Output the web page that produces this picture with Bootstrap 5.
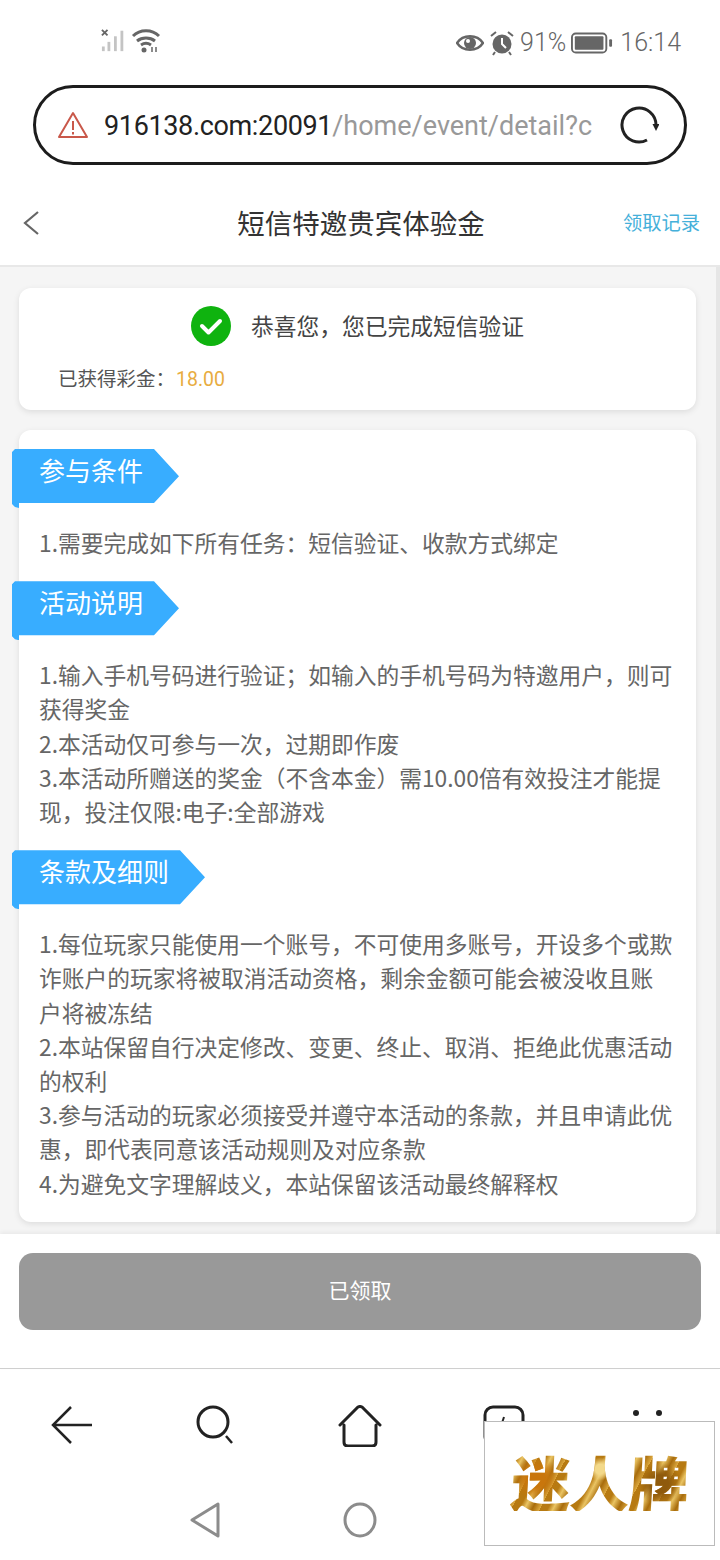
<!DOCTYPE html>
<html lang="zh-CN">
<head>
  <meta charset="UTF-8" />
  <meta name="viewport" content="width=device-width, initial-scale=1.0" />
  <title>短信特邀贵宾体验金</title>
  <link href="https://cdn.jsdelivr.net/npm/bootstrap@5.3.3/dist/css/bootstrap.min.css" rel="stylesheet">
  <style>
    body {
      width: 720px;
      height: 1560px;
      overflow: hidden;
      position: relative;
      background: #fff;
      font-family: "Noto Sans CJK SC", Roboto, sans-serif;
      color: #666;
    }
    .status-bar { height: 85px; padding: 27px 39px 0 101px; color: #666; font-family: Roboto, sans-serif; font-size: 25px; font-weight: 300; line-height: 30px; }
    .status-right { gap: 5px; height: 30px; margin-top: 1px; }
    .status-time { margin-left: 2px; }
    .url-pill { height: 80px; margin: 0 33px; padding: 0 25px 0 22px; border: 3px solid #1c1c1c; border-radius: 40px; }
    .url-text { margin-left: 16px; padding-top: 3px; white-space: nowrap; font-family: Roboto, sans-serif; font-size: 27px; color: #999; }
    .url-text b { font-weight: 400; letter-spacing: -.35px; color: #222; }
    .app-head { height: 102px; padding: 15px 20px 0 22px; border-bottom: 2px solid #e8e8e8; }
    .head-side { width: 100px; }
    .app-title { font-size: 27.5px; color: #333; text-align: center; }
    .app-link { font-size: 19.3px; color: #45b0da; text-align: right; }
    .page-body { height: 967px; padding: 21px 20px 0 19px; background: #f5f5f5; border-right: 4px solid #e6e6e6; overflow: hidden; }
    .info-card { border: 0; border-radius: 12px; background: #fff; box-shadow: 0 2px 6px rgba(0, 0, 0, .1); }
    .done-card { height: 122px; margin-bottom: 20px; padding-top: 18px; }
    .done-text { font-size: 22.75px; color: #444; margin-left: 20px; }
    .bonus-line { margin: 17px 0 0 39px; font-size: 19.5px; color: #555; }
    .bonus-line span { font-family: Roboto, sans-serif; color: #e8ac3f; margin-left: 1px; }
    .rules-card { height: 792px; padding: 19px 23px 0 20px; }
    .tag-ribbon {
      position: relative;
      left: -27px;
      display: block;
      width: var(--w);
      height: 59px;
      padding-left: 27px;
      background: #38adff;
      color: #fff;
      font-size: 26px;
      line-height: 42px;
      clip-path: polygon(3px 0, calc(100% - 25px) 0, 100% 46%, calc(100% - 25px) 54px, 7px 54px, 7px 59px, 3px 58px, 0 55px, 0 3px);
    }
    .rule-text { font-size: 22.75px; line-height: 34.2px; color: #666; }
    .rule-first { margin: 18px 0 21px; }
    .rule-second { margin: 18px 0 21px; }
    .rule-third { margin: 18px 0 0; }
    .foot-bar { position: relative; height: 135px; padding: 19px 19px 0; border-bottom: 1px solid #cfcfcf; background: #fff; box-shadow: 0 -2px 4px rgba(0, 0, 0, .05); }
    .claimed-btn, .claimed-btn:disabled { height: 77px; padding-bottom: 10px; border: 0; border-radius: 14px; background: #999; color: #fff; font-size: 21px; opacity: 1; }
    .browser-tabs { height: 133px; padding-top: 36px; }
    .browser-tabs > div { width: 144px; }
    .soft-keys > div { width: 155px; }
    .gold-mark {
      position: absolute;
      left: 484px;
      top: 1421px;
      width: 231px;
      height: 125px;
      padding-bottom: 6px;
      border: 1px solid #bbb;
      background: #fff;
    }
    .gold-word {
      font-size: 60px;
      font-weight: 900;
      line-height: 1;
      letter-spacing: -1px;
      transform: skewX(-3deg);
      background:
        radial-gradient(circle at 14% 45%, #c9760c 0 6%, transparent 14%),
        radial-gradient(circle at 50% 30%, #f3d98a 0 5%, transparent 12%),
        radial-gradient(circle at 84% 55%, #8f5a0c 0 6%, transparent 14%),
        repeating-linear-gradient(115deg, #b77a12 0 7px, #eac463 12px, #a86c0c 19px, #dda93f 26px);
      -webkit-background-clip: text;
      background-clip: text;
      color: transparent;
    }
  </style>
</head>
<body>

  <!-- Phone status bar -->
  <div class="status-bar d-flex justify-content-between align-items-start">
    <div class="d-flex gap-1">
      <svg width="26" height="26" viewBox="0 0 28 26" fill="#c4c4c4">
        <path d="M1 2l6 6M7 2L1 8" stroke="#666" stroke-width="2" fill="none"/>
        <rect x="1" y="20" width="3" height="5"/><rect x="7" y="15" width="3" height="10"/><rect x="14" y="9" width="3" height="16"/><rect x="21" y="3" width="3" height="22"/>
      </svg>
      <svg width="30" height="26" viewBox="0 0 30 26" fill="none" stroke="#666" stroke-width="3">
        <path d="M2 9c7-7 19-7 26 0M6 14c5-4 13-4 18 0M10 18c3-2 7-2 10 0"/>
        <circle cx="13" cy="23" r="2.5" fill="#666" stroke="none"/>
        <path d="M21 20v5M25 20v5" stroke-width="1.5"/>
      </svg>
    </div>
    <div class="status-right d-flex align-items-center">
      <svg width="28" height="20" viewBox="0 0 28 20">
        <path d="M1 10C7 1 21 1 27 10 21 19 7 19 1 10z" fill="none" stroke="#666" stroke-width="2.5"/>
        <circle cx="14" cy="10" r="6" fill="#666"/><circle cx="12" cy="8" r="2" fill="#fff"/>
      </svg>
      <svg width="26" height="26" viewBox="0 0 26 26">
        <circle cx="13" cy="14" r="9.5" fill="#666"/>
        <path d="M13 8v6l4 4" stroke="#fff" stroke-width="2" fill="none"/>
        <path d="M2 6l5-4M24 6l-5-4M6 22l-2 3M20 22l2 3" stroke="#666" stroke-width="2" fill="none"/>
      </svg>
      <span>91%</span>
      <svg width="42" height="22" viewBox="0 0 44 22">
        <rect x="1" y="1" width="36" height="20" rx="4" fill="none" stroke="#666" stroke-width="2"/>
        <rect x="4" y="4" width="30" height="14" rx="1" fill="#666"/>
        <rect x="40" y="7" width="3" height="8" rx="1" fill="#666"/>
      </svg>
      <span class="status-time">16:14</span>
    </div>
  </div>

  <!-- Browser address bar -->
  <div class="url-pill d-flex align-items-center">
    <svg width="30" height="28" viewBox="0 0 30 28" fill="none" stroke="#c9584a" stroke-width="2">
      <path d="M15 2L29 26H1z" stroke-linejoin="round"/>
      <path d="M15 10v9M15 21v2.5"/>
    </svg>
    <div class="url-text"><b>916138.com:20091</b>/home/event/detail?c</div>
    <svg class="ms-auto" width="40" height="40" viewBox="0 0 40 40" fill="none" stroke="#222" stroke-width="3">
      <path d="M28 35A17 17 0 1 1 37 20"/>
      <path d="M33.500 19h7l-3.500 7z" fill="#222" stroke="none"/>
    </svg>
  </div>

  <!-- App header -->
  <div class="app-head d-flex align-items-center justify-content-between">
    <div class="head-side">
      <svg class="d-block" width="18" height="26" viewBox="0 0 18 26" fill="none" stroke="#666" stroke-width="2.2"><path d="M16 2L3 13l13 11"/></svg>
    </div>
    <div class="app-title">短信特邀贵宾体验金</div>
    <div class="app-link head-side">领取记录</div>
  </div>

  <!-- Page content -->
  <div class="page-body">
    <div class="card info-card done-card">
      <div class="d-flex align-items-center justify-content-center">
        <svg width="40" height="40" viewBox="0 0 40 40">
          <circle cx="20" cy="20" r="20" fill="#0fb30f"/>
          <path d="M11 20l6.500 6.500L29 15" fill="none" stroke="#fff" stroke-width="4" stroke-linecap="round" stroke-linejoin="round"/>
        </svg>
        <div class="done-text">恭喜您，您已完成短信验证</div>
      </div>
      <div class="bonus-line">已获得彩金：<span>18.00</span></div>
    </div>

    <div class="card info-card rules-card">
      <div class="tag-ribbon" style="--w: 167px">参与条件</div>
      <p class="rule-text rule-first">1.需要完成如下所有任务：短信验证、收款方式绑定</p>

      <div class="tag-ribbon" style="--w: 167px">活动说明</div>
      <p class="rule-text rule-second">1.输入手机号码进行验证；如输入的手机号码为特邀用户，则可获得奖金<br>2.本活动仅可参与一次，过期即作废<br>3.本活动所赠送的奖金（不含本金）需10.00倍有效投注才能提现，投注仅限:电子:全部游戏</p>

      <div class="tag-ribbon" style="--w: 193px">条款及细则</div>
      <p class="rule-text rule-third">1.每位玩家只能使用一个账号，不可使用多账号，开设多个或欺诈账户的玩家将被取消活动资格，剩余金额可能会被没收且账户将被冻结<br>2.本站保留自行决定修改、变更、终止、取消、拒绝此优惠活动的权利<br>3.参与活动的玩家必须接受并遵守本活动的条款，并且申请此优惠，即代表同意该活动规则及对应条款<br>4.为避免文字理解歧义，本站保留该活动最终解释权</p>
    </div>
  </div>

  <!-- Claim button -->
  <div class="foot-bar">
    <button class="btn claimed-btn w-100" disabled>已领取</button>
  </div>

  <!-- Browser toolbar -->
  <div class="browser-tabs d-flex">
    <div class="d-flex justify-content-center">
      <svg width="42" height="40" viewBox="0 0 42 40" fill="none" stroke="#222" stroke-width="2.500"><path d="M41 20H2M20 2L2 20l18 18"/></svg>
    </div>
    <div class="d-flex justify-content-center">
      <svg width="40" height="40" viewBox="0 0 40 40" fill="none" stroke="#222" stroke-width="3"><circle cx="17" cy="17" r="15"/><path d="M30 31l6 7" stroke-width="2.500"/></svg>
    </div>
    <div class="d-flex justify-content-center">
      <svg width="44" height="42" viewBox="0 0 44 42" fill="none" stroke="#222" stroke-width="3"><path d="M2 20L20 2q2-1 4 0l18 18M6 20v17q0 4 4 4h24q4 0 4-4V20" stroke-linecap="round"/></svg>
    </div>
    <div class="d-flex justify-content-center">
      <svg width="42" height="40" viewBox="0 0 42 40" fill="none" stroke="#222" stroke-width="3"><rect x="2" y="2" width="38" height="38" rx="8"/><path d="M21 12l-3 9" stroke-width="2"/></svg>
    </div>
    <div class="d-flex justify-content-center">
      <svg width="40" height="40" viewBox="0 0 40 40" fill="#222"><circle cx="8" cy="8" r="3"/><circle cx="31" cy="8" r="3"/><circle cx="8" cy="30" r="3"/><circle cx="31" cy="30" r="3"/></svg>
    </div>
  </div>

  <!-- Android soft keys -->
  <div class="soft-keys d-flex justify-content-center">
    <div class="d-flex justify-content-center">
      <svg width="32" height="36" viewBox="0 0 32 36" fill="none" stroke="#8c8c8c" stroke-width="3" stroke-linejoin="round"><path d="M29 2v32L3 18z"/></svg>
    </div>
    <div class="d-flex justify-content-center">
      <svg width="34" height="36" viewBox="0 0 34 36" fill="none" stroke="#8c8c8c" stroke-width="3"><ellipse cx="17" cy="18" rx="15" ry="16"/></svg>
    </div>
    <div></div>
  </div>

  <!-- Watermark over the toolbar -->
  <div class="gold-mark d-flex align-items-center justify-content-center">
    <div class="gold-word">迷人牌</div>
  </div>

  <script src="https://cdn.jsdelivr.net/npm/bootstrap@5.3.3/dist/js/bootstrap.bundle.min.js"></script>
</body>
</html>
